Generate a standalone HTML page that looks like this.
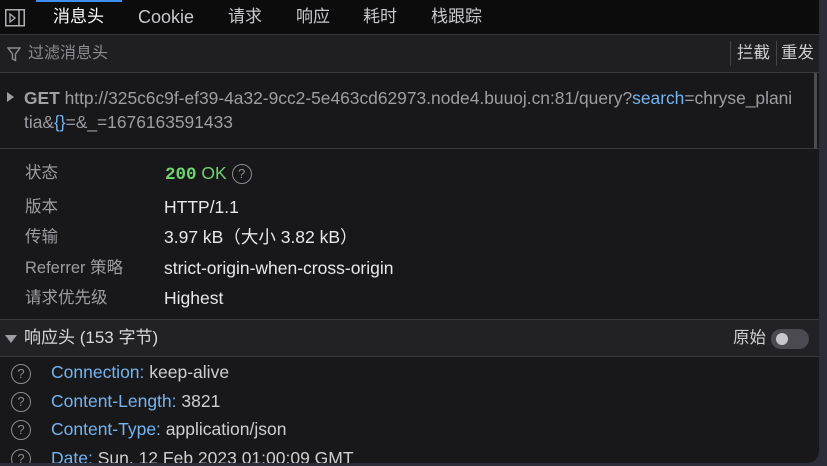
<!DOCTYPE html>
<html><head><meta charset="utf-8"><style>
*{box-sizing:border-box;margin:0;padding:0}
body{width:827px;height:466px;overflow:hidden;background:#2b2e36;font-family:"Liberation Sans","Noto Sans CJK SC",sans-serif;font-size:16.5px;color:#e8e8ea;position:relative}
#panel{position:absolute;left:0;top:0;width:819px;height:463px;background:#18181b;border-bottom-right-radius:12px;overflow:hidden}
.abs{position:absolute;white-space:nowrap;line-height:22px}
.tabs{height:35px;background:#0c0c0d;border-bottom:1px solid #38383d;position:relative}
.tabs span{position:absolute;top:6px;font-size:17px;line-height:22px;color:#c8c8cc}
.filter{height:38px;background:#1f1f23;border-bottom:1px solid #38383d;position:relative;color:#8c8c92}
.lbl{color:#9d9da3}
.v{font-size:17.5px}
.blue{color:#74b4f0}
.q{display:inline-block;width:20px;height:20px;border:1.5px solid #8a8a90;border-radius:50%;text-align:center;font-size:13px;line-height:17px;color:#8a8a90;vertical-align:middle}
</style></head><body>
<div id="panel">
 <div class="tabs">
  <div class="abs" style="left:36px;top:0;width:86px;height:2px;background:#3d8ff0"></div>
  <svg class="abs" style="left:5px;top:9px" width="20" height="18"><rect x="0.75" y="0.75" width="18.5" height="16" fill="none" stroke="#b0b0b4" stroke-width="1.5"/><line x1="14" y1="1" x2="14" y2="17" stroke="#b0b0b4" stroke-width="1.5"/><path d="M5 5 L10 9 L5 13 Z" fill="none" stroke="#b0b0b4" stroke-width="1.3"/></svg>
  <span style="left:53px;color:#fff">消息头</span>
  <span style="left:138px;font-size:18px">Cookie</span>
  <span style="left:228px">请求</span>
  <span style="left:296px">响应</span>
  <span style="left:363px">耗时</span>
  <span style="left:431px">栈跟踪</span>
 </div>
 <div class="filter">
  <svg class="abs" style="left:7px;top:12px" width="14" height="15"><path d="M1 1 H13 L8.5 7 V13.5 L5.5 12 V7 Z" fill="none" stroke="#8c8c92" stroke-width="1.4"/></svg>
  <div class="abs" style="left:28px;top:8px;font-size:16px">过滤消息头</div>
  <div class="abs" style="left:730px;top:6px;width:1px;height:25px;background:#44444a"></div>
  <div class="abs" style="left:737px;top:7px;color:#cfcfd3">拦截</div>
  <div class="abs" style="left:776px;top:6px;width:1px;height:25px;background:#44444a"></div>
  <div class="abs" style="left:781px;top:7px;color:#cfcfd3">重发</div>
 </div>
 <div style="position:relative;height:76px;border-bottom:1px solid #38383d">
  <svg class="abs" style="left:7px;top:19px" width="8" height="10"><path d="M0 0 L7 5 L0 10Z" fill="#9d9da3"/></svg>
  <div class="abs" style="left:24px;top:14px;font-size:17.4px;color:#a0a0a5"><b>GET</b> <span style="color:#9d9da3">http://325c6c9f-ef39-4a32-9cc2-5e463cd62973.node4.buuoj.cn:81/query?</span><span class="blue">search</span><span style="color:#9d9da3">=chryse_plani</span></div>
  <div class="abs" style="left:24px;top:38px;font-size:17.4px;color:#9d9da3">tia&amp;<span class="blue">{}</span>=&amp;_=1676163591433</div>
  <div class="abs" style="left:814px;top:0;width:3px;height:76px;background:#4a4a50"></div>
 </div>
 <div style="position:relative;height:171px;border-bottom:1px solid #38383d">
  <div class="abs lbl" style="left:25px;top:13px">状态</div>
  <div class="abs v" style="left:165px;top:13px"><b style="font-family:'Liberation Mono',monospace;color:#6fd36f">200</b> <span style="color:#6fd36f">OK</span> <span class="q">?</span></div>
  <div class="abs lbl" style="left:25px;top:47px">版本</div>
  <div class="abs v" style="left:164px;top:47px">HTTP/1.1</div>
  <div class="abs lbl" style="left:25px;top:77px">传输</div>
  <div class="abs v" style="left:164px;top:77px">3.97 kB（大小 3.82 kB）</div>
  <div class="abs lbl" style="left:25px;top:108px">Referrer 策略</div>
  <div class="abs v" style="left:164px;top:108px">strict-origin-when-cross-origin</div>
  <div class="abs lbl" style="left:25px;top:138px">请求优先级</div>
  <div class="abs v" style="left:164px;top:138px">Highest</div>
 </div>
 <div style="position:relative;height:37px;background:#222226;border-bottom:1px solid #38383d">
  <svg class="abs" style="left:5px;top:15px" width="12" height="8"><path d="M0 0 H12 L6 8Z" fill="#9d9da3"/></svg>
  <div class="abs" style="left:24px;top:7px;color:#d8d8dc;font-size:17px">响应头 (153 字节)</div>
  <div class="abs" style="left:733px;top:7px;color:#cfcfd3">原始</div>
  <div class="abs" style="left:771px;top:9px;width:38px;height:20px;border-radius:10px;background:#4a4a50"></div>
  <div class="abs" style="left:776px;top:13px;width:12px;height:12px;border-radius:50%;background:#c8c8cc"></div>
 </div>
 <div style="position:relative">
  <div class="abs" style="left:11px;top:5px"><span class="q">?</span></div>
  <div class="abs v" style="left:51px;top:4px"><span class="blue">Connection:</span> <span style="color:#cfcfd3">keep-alive</span></div>
  <div class="abs" style="left:11px;top:33px"><span class="q">?</span></div>
  <div class="abs v" style="left:51px;top:33px"><span class="blue">Content-Length:</span> <span style="color:#cfcfd3">3821</span></div>
  <div class="abs" style="left:11px;top:61px"><span class="q">?</span></div>
  <div class="abs v" style="left:51px;top:61px"><span class="blue">Content-Type:</span> <span style="color:#cfcfd3">application/json</span></div>
  <div class="abs" style="left:11px;top:90px"><span class="q">?</span></div>
  <div class="abs v" style="left:51px;top:90px"><span class="blue">Date:</span> <span style="color:#cfcfd3">Sun, 12 Feb 2023 01:00:09 GMT</span></div>
 </div>
</div>
</body></html>
